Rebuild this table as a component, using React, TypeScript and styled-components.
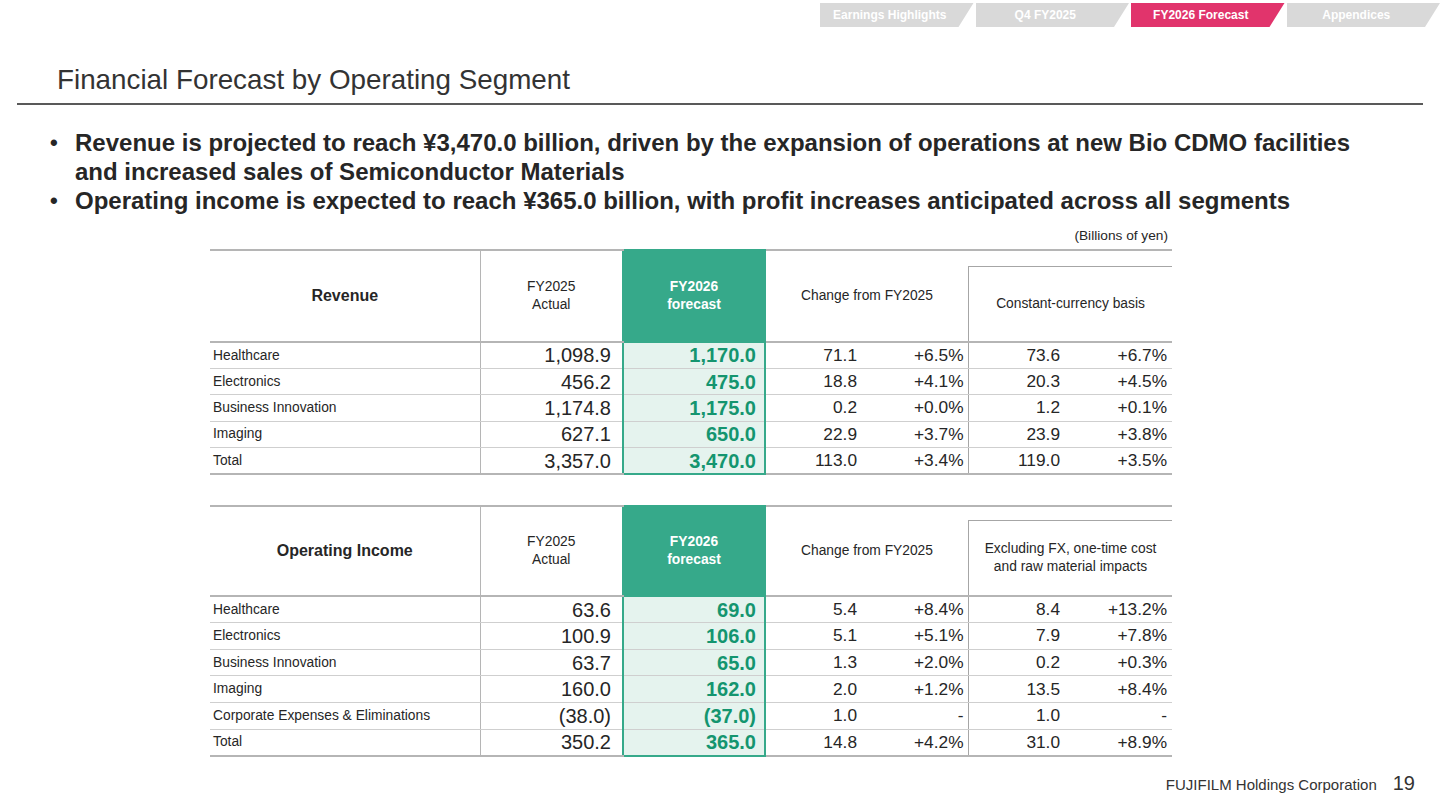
import React from 'react';
import styled, { createGlobalStyle, css } from 'styled-components';

const GlobalStyle = createGlobalStyle`
  html, body { margin: 0; padding: 0; background: #fff; }
  body { font-family: "Liberation Sans", Arial, Helvetica, sans-serif; color: #262626; }
  * { box-sizing: border-box; }
`;

const Page = styled.div`
  width: 1440px;
  height: 810px;
  overflow: hidden;
  display: flex;
  flex-direction: column;
  background: #fff;
`;

const NavBar = styled.nav`
  display: flex;
  justify-content: flex-end;
  gap: 2px;
  padding-top: 3px;
  height: 27px;
`;

const NavTab = styled.div<{ $active?: boolean }>`
  width: 153.5px;
  height: 24px;
  background: ${(p) => (p.$active ? '#e1346c' : '#d9d9d9')};
  clip-path: polygon(0 0, 100% 0, calc(100% - 15px) 100%, 0 100%);
  color: #fff;
  font-size: 12px;
  font-weight: 700;
  line-height: 24px;
  text-align: center;
  padding-right: 14px;
  white-space: nowrap;
`;

const TitleBar = styled.h1`
  margin: 38px 17px 0;
  padding: 0 0 8px 40px;
  border-bottom: 2px solid #595959;
  font-size: 27.8px;
  line-height: 30px;
  font-weight: 400;
  color: #333;
`;

const BulletList = styled.ul`
  list-style: none;
  margin: 23px 0 0;
  padding: 0 0 0 50px;
  font-size: 24px;
  font-weight: 700;
  line-height: 29px;
  color: #262626;
`;

const BulletItem = styled.li`
  display: flex;
`;

const BulletDot = styled.span`
  width: 25px;
  flex: none;
  font-size: 22px;
`;

const BulletText = styled.span`
  white-space: nowrap;
`;

const TableArea = styled.section<{ $top: number }>`
  margin-left: 210px;
  margin-top: ${(p) => p.$top}px;
  width: 962px;
  display: flex;
  flex-direction: column;
`;

const Unit = styled.div`
  text-align: right;
  padding-right: 4px;
  font-size: 13.7px;
  line-height: 16px;
  margin-bottom: 5px;
`;

const DataTable = styled.table`
  width: 962px;
  border-collapse: collapse;
  table-layout: fixed;
  color: #262626;
`;

const HeadRow = styled.tr<{ $h: number }>`
  height: ${(p) => p.$h}px;
`;

type HeadKind = 'label' | 'plain' | 'forecast' | 'boxed';

const HeadCell = styled.th<{ $kind: HeadKind }>`
  padding: 0;
  border-top: 2px solid #b5b5b5;
  border-bottom: 2px solid #b5b5b5;
  font-weight: 400;
  font-size: 13.8px;
  line-height: 18px;
  vertical-align: middle;
  text-align: center;
  ${(p) =>
    p.$kind === 'label' &&
    css`
      font-size: 16px;
      font-weight: 700;
      border-right: 1px solid #b5b5b5;
    `}
  ${(p) =>
    p.$kind === 'forecast' &&
    css`
      background: #36a98a;
      color: #fff;
      font-weight: 700;
      border: 2px solid #36a98a;
    `}
  ${(p) =>
    p.$kind === 'boxed' &&
    css`
      vertical-align: bottom;
    `}
`;

const HeadBox = styled.div<{ $h: number }>`
  height: ${(p) => p.$h}px;
  border-top: 1px solid #a6a6a6;
  border-left: 1px solid #a6a6a6;
  display: flex;
  align-items: center;
  justify-content: center;
  text-align: center;
`;

const BodyRow = styled.tr<{ $h: number }>`
  height: ${(p) => p.$h}px;
`;

type CellKind = 'label' | 'actual' | 'forecast' | 'chg';

const Cell = styled.td<{ $kind: CellKind; $last?: boolean; $divider?: boolean; $pr?: number }>`
  padding: 0 ${(p) => p.$pr ?? 0}px 0 0;
  white-space: nowrap;
  text-align: right;
  line-height: 1;
  vertical-align: middle;
  border-bottom: ${(p) => (p.$last ? '2px solid #b5b5b5' : '1px solid #cfcfcf')};
  ${(p) => p.$divider && css`border-left: 1px solid #a6a6a6;`}
  ${(p) =>
    p.$kind === 'label' &&
    css`
      text-align: left;
      padding-left: 3px;
      font-size: 13.8px;
      border-right: 1px solid #b5b5b5;
    `}
  ${(p) =>
    p.$kind === 'actual' &&
    css`
      font-size: 20px;
    `}
  ${(p) =>
    p.$kind === 'forecast' &&
    css`
      font-size: 20px;
      font-weight: 700;
      color: #14956f;
      background: #e5f3ee;
      border-left: 2px solid #36a98a;
      border-right: 2px solid #36a98a;
      ${p.$last && 'border-bottom: 2px solid #36a98a;'}
    `}
  ${(p) =>
    p.$kind === 'chg' &&
    css`
      font-size: 17.3px;
    `}
`;

const Footer = styled.footer`
  margin-top: auto;
  display: flex;
  justify-content: flex-end;
  align-items: baseline;
  gap: 16px;
  padding: 0 25px 13px 0;
  color: #333;
`;

const Company = styled.span`
  font-size: 15px;
  line-height: 24px;
`;

const PageNo = styled.span`
  font-size: 20px;
  line-height: 24px;
`;

type Row = [string, string, string, string, string, string, string];

const revenueRows: Row[] = [
  ['Healthcare', '1,098.9', '1,170.0', '71.1', '+6.5%', '73.6', '+6.7%'],
  ['Electronics', '456.2', '475.0', '18.8', '+4.1%', '20.3', '+4.5%'],
  ['Business Innovation', '1,174.8', '1,175.0', '0.2', '+0.0%', '1.2', '+0.1%'],
  ['Imaging', '627.1', '650.0', '22.9', '+3.7%', '23.9', '+3.8%'],
  ['Total', '3,357.0', '3,470.0', '113.0', '+3.4%', '119.0', '+3.5%'],
];

const incomeRows: Row[] = [
  ['Healthcare', '63.6', '69.0', '5.4', '+8.4%', '8.4', '+13.2%'],
  ['Electronics', '100.9', '106.0', '5.1', '+5.1%', '7.9', '+7.8%'],
  ['Business Innovation', '63.7', '65.0', '1.3', '+2.0%', '0.2', '+0.3%'],
  ['Imaging', '160.0', '162.0', '2.0', '+1.2%', '13.5', '+8.4%'],
  ['Corporate Expenses & Eliminations', '(38.0)', '(37.0)', '1.0', '-', '1.0', '-'],
  ['Total', '350.2', '365.0', '14.8', '+4.2%', '31.0', '+8.9%'],
];

const colWidths = [270, 143, 142, 100, 103, 100, 104];

function SegmentTable(props: {
  title: string;
  box: React.ReactNode;
  rows: Row[];
  headH: number;
  boxH: number;
  rowH: number;
}) {
  const { title, box, rows, headH, boxH, rowH } = props;
  return (
    <DataTable>
      <colgroup>
        {colWidths.map((w, i) => (
          <col key={i} style={{ width: w }} />
        ))}
      </colgroup>
      <thead>
        <HeadRow $h={headH}>
          <HeadCell $kind="label">{title}</HeadCell>
          <HeadCell $kind="plain">
            FY2025
            <br />
            Actual
          </HeadCell>
          <HeadCell $kind="forecast">
            FY2026
            <br />
            forecast
          </HeadCell>
          <HeadCell $kind="plain" colSpan={2}>
            Change from FY2025
          </HeadCell>
          <HeadCell $kind="boxed" colSpan={2}>
            <HeadBox $h={boxH}>{box}</HeadBox>
          </HeadCell>
        </HeadRow>
      </thead>
      <tbody>
        {rows.map((r, i) => {
          const last = i === rows.length - 1;
          return (
            <BodyRow key={r[0]} $h={rowH}>
              <Cell $kind="label" $last={last}>{r[0]}</Cell>
              <Cell $kind="actual" $last={last} $pr={11}>{r[1]}</Cell>
              <Cell $kind="forecast" $last={last} $pr={8}>{r[2]}</Cell>
              <Cell $kind="chg" $last={last} $pr={8}>{r[3]}</Cell>
              <Cell $kind="chg" $last={last} $pr={4}>{r[4]}</Cell>
              <Cell $kind="chg" $last={last} $pr={8} $divider>{r[5]}</Cell>
              <Cell $kind="chg" $last={last} $pr={5}>{r[6]}</Cell>
            </BodyRow>
          );
        })}
      </tbody>
    </DataTable>
  );
}

export default function App() {
  return (
    <Page>
      <GlobalStyle />
      <NavBar>
        <NavTab>Earnings Highlights</NavTab>
        <NavTab>Q4 FY2025</NavTab>
        <NavTab $active>FY2026 Forecast</NavTab>
        <NavTab>Appendices</NavTab>
      </NavBar>
      <TitleBar>Financial Forecast by Operating Segment</TitleBar>
      <BulletList>
        <BulletItem>
          <BulletDot>•</BulletDot>
          <BulletText>
            Revenue is projected to reach ¥3,470.0 billion, driven by the expansion of operations at new Bio CDMO facilities
            <br />
            and increased sales of Semiconductor Materials
          </BulletText>
        </BulletItem>
        <BulletItem>
          <BulletDot>•</BulletDot>
          <BulletText>
            Operating income is expected to reach ¥365.0 billion, with profit increases anticipated across all segments
          </BulletText>
        </BulletItem>
      </BulletList>
      <TableArea $top={13}>
        <Unit>(Billions of yen)</Unit>
        <SegmentTable
          title="Revenue"
          box="Constant-currency basis"
          rows={revenueRows}
          headH={92}
          boxH={75}
          rowH={26.4}
        />
      </TableArea>
      <TableArea $top={30}>
        <SegmentTable
          title="Operating Income"
          box={
            <span>
              Excluding FX, one-time cost
              <br />
              and raw material impacts
            </span>
          }
          rows={incomeRows}
          headH={90}
          boxH={75}
          rowH={26.67}
        />
      </TableArea>
      <Footer>
        <Company>FUJIFILM Holdings Corporation</Company>
        <PageNo>19</PageNo>
      </Footer>
    </Page>
  );
}
